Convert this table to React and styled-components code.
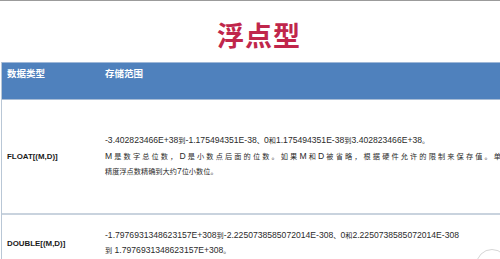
import React from "react";
import styled, { createGlobalStyle } from "styled-components";

const Global = createGlobalStyle`
  html, body {
    margin: 0;
    padding: 0;
    background: #ffffff;
    overflow: hidden;
  }
  body {
    width: 500px;
    height: 259px;
    font-family: "Liberation Sans", "Noto Sans CJK SC", sans-serif;
  }
`;

const Page = styled.div`
  position: relative;
  width: 500px;
  height: 259px;
  overflow: hidden;
  border-top: 1px solid #9b9b9b;
  box-sizing: border-box;
`;

const Title = styled.h1`
  margin: 0;
  padding: 20px 0 0 18px;
  height: 61px;
  box-sizing: border-box;
  text-align: center;
  font-family: "Noto Sans CJK SC", sans-serif;
  font-size: 27px;
  line-height: 27px;
  font-weight: 700;
  color: #c0264b;
  letter-spacing: 1px;
`;

const Table = styled.div`
  margin-left: 1px;
  width: 520px;
  border-left: 1.5px solid #b9c7d6;
  display: flex;
  flex-direction: column;
`;

const Row = styled.div`
  display: grid;
  grid-template-columns: 98px 1fr;
  height: ${(p) => p.$h}px;
  box-sizing: border-box;
  background: ${(p) => (p.$head ? "#4f81bd" : "#ffffff")};
  border-top: ${(p) => (p.$head ? "1px solid #9fb8d8" : "none")};
  border-bottom: ${(p) => (p.$head ? "1px solid #a9bdd6" : "2px solid #c9d3de")};
`;

const HeadCell = styled.div`
  padding: 6px 0 0 5px;
  color: #ffffff;
  font-family: "Liberation Serif", "Noto Sans CJK SC", serif;
  font-weight: 700;
  font-size: 9.5px;
  line-height: 10px;
`;

const TypeCell = styled.div`
  display: flex;
  align-items: center;
  padding-left: 5px;
  font-family: "Liberation Sans", sans-serif;
  font-weight: 700;
  font-size: 7.9px;
  color: #1a1a1a;
`;

const RangeCell = styled.div`
  display: flex;
  flex-direction: column;
  justify-content: center;
  padding-left: 5px;
  font-size: 8.6px;
  line-height: 15.5px;
  color: #2b2b2b;
`;

const Line = styled.div`
  white-space: ${(p) => (p.$w ? "normal" : "nowrap")};
  width: ${(p) => (p.$w ? `${p.$w}px` : "auto")};
  text-align: ${(p) => (p.$w ? "justify" : "left")};
  text-align-last: ${(p) => (p.$w ? "justify" : "auto")};
  text-justify: inter-character;
`;

const Han = styled.span`
  font-family: "Noto Sans CJK SC", sans-serif;
  font-size: 7.2px;
`;

const CJK = /([\u3000-\u303f\u4e00-\u9fff\uff00-\uffef]+)/;

function Mixed({ text }) {
  return text
    .split(CJK)
    .filter(Boolean)
    .map((part, i) => (CJK.test(part) ? <Han key={i}>{part}</Han> : <React.Fragment key={i}>{part}</React.Fragment>));
}

const CornerButton = styled.div`
  position: absolute;
  right: -8px;
  bottom: -22px;
  width: 30px;
  height: 30px;
  border-radius: 50%;
  border: 1.5px solid #d6d6d6;
  background: #ffffff;
`;

export default function App() {
  return (
    <Page>
      <Global />
      <Title>浮点型</Title>
      <Table>
        <Row $head $h={38}>
          <HeadCell>数据类型</HeadCell>
          <HeadCell>存储范围</HeadCell>
        </Row>
        <Row $h={115}>
          <TypeCell>FLOAT[(M,D)]</TypeCell>
          <RangeCell>
            <Line><Mixed text="-3.402823466E+38到-1.175494351E-38、0和1.175494351E-38到3.402823466E+38。" /></Line>
            <Line $w={396}><Mixed text="M是数字总位数，D是小数点后面的位数。如果M和D被省略，根据硬件允许的限制来保存值。单" /></Line>
            <Line><Mixed text="精度浮点数精确到大约7位小数位。" /></Line>
          </RangeCell>
        </Row>
        <Row $h={58}>
          <TypeCell>DOUBLE[(M,D)]</TypeCell>
          <RangeCell>
            <Line><Mixed text="-1.7976931348623157E+308到-2.2250738585072014E-308、0和2.2250738585072014E-308" /></Line>
            <Line><Mixed text="到 1.7976931348623157E+308。" /></Line>
          </RangeCell>
        </Row>
      </Table>
      <CornerButton />
    </Page>
  );
}
